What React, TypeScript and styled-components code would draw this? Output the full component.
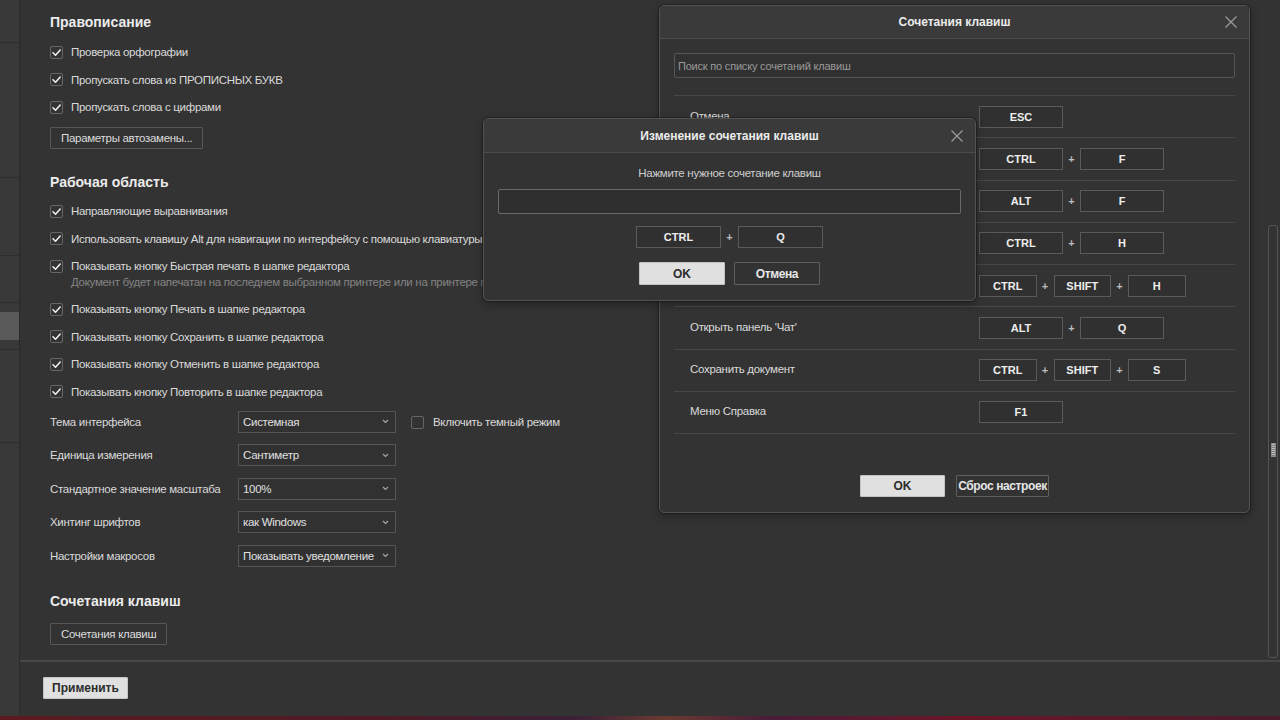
import React from "react";
import styled, { createGlobalStyle, css } from "styled-components";

const GlobalStyle = createGlobalStyle`
  html, body { margin: 0; padding: 0; background: #333; }
  body { font-family: "Liberation Sans", Arial, sans-serif; }
  * { box-sizing: border-box; }
`;

const bodyText = css`
  font-size: 11.5px;
  letter-spacing: -0.3px;
  white-space: nowrap;
`;

const Screen = styled.div`
  position: relative;
  width: 1280px;
  height: 720px;
  overflow: hidden;
  background: #333;
  display: flex;
  flex-direction: column;
  color: #dcdcdc;
`;

const Workspace = styled.div`
  flex: 1;
  display: flex;
  min-height: 0;
`;

const Sidebar = styled.div`
  width: 20px;
  background: #393939;
  border-right: 1px solid #2a2a2a;
  display: flex;
  flex-direction: column;
`;

const SideItem = styled.div<{ $h: number }>`
  height: ${(p) => p.$h}px;
  border-bottom: 1px solid #2e2e2e;
  flex: none;
`;

const SideActive = styled.div`
  margin-top: 9px;
  height: 28px;
  background: #5a5a5a;
`;

const Main = styled.div`
  flex: 1;
  display: flex;
  flex-direction: column;
  min-width: 0;
`;

const MainBody = styled.div`
  height: 660px;
  display: flex;
`;

const Content = styled.div`
  flex: 1;
  padding: 13px 0 0 30px;
  display: flex;
  flex-direction: column;
  align-items: flex-start;
`;

const ScrollColumn = styled.div`
  width: 14px;
  padding: 225px 2px 2px 2px;
  display: flex;
`;

const ScrollTrack = styled.div`
  flex: 1;
  border: 1px solid #555;
  border-radius: 3px;
  display: flex;
  align-items: center;
  justify-content: center;
`;

const ScrollGrip = styled.div`
  width: 5px;
  height: 14px;
  margin-top: 16px;
  background: repeating-linear-gradient(
    180deg,
    #bdbdbd 0px,
    #bdbdbd 1px,
    #7a7a7a 1px,
    #7a7a7a 2px
  );
  border: 1px solid #8a8a8a;
`;

const Footer = styled.div`
  height: 56px;
  border-top: 2px solid #474747;
  padding: 15px 0 0 23px;
`;

const BottomStrip = styled.div`
  height: 4px;
  background: linear-gradient(
    90deg,
    #5b1a1f 0%,
    #4f1a25 30%,
    #3b2038 45%,
    #6a3a30 52%,
    #4a1c38 60%,
    #6b1628 75%,
    #4a1a2a 100%
  );
`;

const SectionTitle = styled.div<{ $mt?: number }>`
  margin-top: ${(p) => p.$mt ?? 0}px;
  font-size: 14px;
  line-height: 18px;
  font-weight: bold;
  color: #ececec;
`;

const CheckList = styled.div<{ $mt: number }>`
  margin-top: ${(p) => p.$mt}px;
  display: flex;
  flex-direction: column;
`;

const CheckRow = styled.div`
  display: flex;
  align-items: flex-start;
  gap: 8px;
  padding: 7px 0 6.5px;
`;

const Box = styled.span`
  flex: none;
  width: 13px;
  height: 13px;
  margin-top: 0.5px;
  border: 1px solid #666;
  border-radius: 2px;
  background: #333;
  display: flex;
  align-items: center;
  justify-content: center;
`;

const CheckText = styled.div`
  display: flex;
  flex-direction: column;
`;

const Label = styled.span`
  ${bodyText};
  line-height: 14px;
  color: #dadada;
`;

const SubLabel = styled.span`
  ${bodyText};
  margin-top: 1.5px;
  line-height: 14px;
  color: #848484;
`;

const Button = styled.button<{ $mt?: number }>`
  ${bodyText};
  margin-top: ${(p) => p.$mt ?? 0}px;
  height: 22px;
  padding: 0 10px;
  border: 1px solid #575757;
  border-radius: 1px;
  background: #333;
  color: #dcdcdc;
  font-family: inherit;
`;

const PrimaryButton = styled.button<{ $w: number; $h?: number }>`
  width: ${(p) => p.$w}px;
  height: ${(p) => p.$h ?? 22}px;
  padding: 0;
  border: 1px solid #c4c4c4;
  border-radius: 1px;
  background: #e0e0e0;
  color: #2c2c2c;
  font-family: inherit;
  font-size: 12px;
  font-weight: bold;
  white-space: nowrap;
`;

const DarkButton = styled.button<{ $w: number; $h?: number }>`
  width: ${(p) => p.$w}px;
  height: ${(p) => p.$h ?? 22}px;
  padding: 0;
  border: 1px solid #5e5e5e;
  border-radius: 1px;
  background: #323232;
  color: #e6e6e6;
  font-family: inherit;
  font-size: 12px;
  font-weight: bold;
  letter-spacing: -0.4px;
  white-space: nowrap;
`;

const FormList = styled.div`
  display: flex;
  flex-direction: column;
`;

const FormRow = styled.div`
  height: 33.5px;
  display: flex;
  align-items: center;
`;

const FormLabel = styled.span`
  ${bodyText};
  width: 188px;
  color: #dadada;
`;

const Select = styled.div`
  ${bodyText};
  width: 158px;
  height: 22px;
  border: 1px solid #555;
  background: #313131;
  display: flex;
  align-items: center;
  justify-content: space-between;
  padding: 0 6px 0 4px;
  color: #e0e0e0;
`;

const InlineCheck = styled.div`
  margin-left: 15px;
  display: flex;
  align-items: center;
  gap: 9px;
`;

/* dialogs */
const Dialog = styled.div<{ $l: number; $t: number; $w: number; $h: number }>`
  position: absolute;
  left: ${(p) => p.$l}px;
  top: ${(p) => p.$t}px;
  width: ${(p) => p.$w}px;
  height: ${(p) => p.$h}px;
  background: #333;
  border: 1px solid #525252;
  border-radius: 5px;
  box-shadow: 0 0 0 1px rgba(0, 0, 0, 0.25), 0 3px 10px rgba(0, 0, 0, 0.35);
  display: flex;
  flex-direction: column;
  overflow: hidden;
`;

const DialogHeader = styled.div<{ $h: number }>`
  position: relative;
  height: ${(p) => p.$h}px;
  flex: none;
  background: #3a3a3a;
  border-bottom: 1px solid #4b4b4b;
  display: flex;
  align-items: center;
  justify-content: center;
  font-size: 12px;
  font-weight: bold;
  color: #ececec;
`;

const CloseBtn = styled.span`
  position: absolute;
  right: 11px;
  top: 50%;
  transform: translateY(-50%);
  width: 14px;
  height: 14px;
  display: flex;
`;

const DialogBody = styled.div`
  flex: 1;
  padding: 14px 14px 0;
  display: flex;
  flex-direction: column;
`;

const SearchInput = styled.div`
  height: 25px;
  border: 1px solid #555;
  border-radius: 2px;
  background: #313131;
  display: flex;
  align-items: center;
  padding-left: 3px;
  font-size: 11px;
  color: #9a9a9a;
  letter-spacing: -0.2px;
`;

const ShortcutList = styled.div`
  margin-top: 17px;
  border-top: 1px solid #474747;
`;

const ShortcutRow = styled.div`
  height: 42.25px;
  border-bottom: 1px solid #474747;
  display: grid;
  grid-template-columns: 305px 1fr;
  align-items: center;
`;

const ShortcutName = styled.span`
  ${bodyText};
  padding-left: 16px;
  padding-bottom: 2px;
  color: #dadada;
`;

const Keys = styled.div<{ $center?: boolean }>`
  display: flex;
  align-items: center;
  justify-content: ${(p) => (p.$center ? "center" : "flex-start")};
`;

const Key = styled.span<{ $w: number }>`
  width: ${(p) => p.$w}px;
  height: 22px;
  border: 1px solid #5a5a5a;
  background: #303030;
  display: flex;
  align-items: center;
  justify-content: center;
  font-size: 11px;
  font-weight: bold;
  color: #ededed;
`;

const Plus = styled.span`
  width: 17px;
  text-align: center;
  font-size: 11px;
  font-weight: bold;
  color: #bdbdbd;
`;

const DialogButtons = styled.div<{ $mt: number; $gap: number }>`
  margin-top: ${(p) => p.$mt}px;
  display: flex;
  justify-content: center;
  gap: ${(p) => p.$gap}px;
`;

const Prompt = styled.div`
  ${bodyText};
  margin-top: -1px;
  text-align: center;
  line-height: 14px;
  color: #cfcfcf;
`;

const KeyInput = styled.div`
  margin-top: 9px;
  height: 25px;
  border: 1px solid #6a6a6a;
  border-radius: 2px;
  background: #2f2f2f;
`;

const KeysBlock = styled.div`
  margin-top: 12px;
`;

const Check = () => (
  <svg width="11" height="11" viewBox="0 0 11 11">
    <polyline
      points="2,5.8 4.5,8.2 9.2,3"
      fill="none"
      stroke="#f2f2f2"
      strokeWidth="1.5"
      strokeLinecap="round"
      strokeLinejoin="round"
    />
  </svg>
);

const Chevron = () => (
  <svg width="7" height="5" viewBox="0 0 7 5">
    <polyline points="1,1 3.5,3.5 6,1" fill="none" stroke="#a8a8a8" strokeWidth="1.1" />
  </svg>
);

const CloseIcon = () => (
  <svg width="14" height="14" viewBox="0 0 14 14">
    <path d="M1.5 1.5 L12.5 12.5 M12.5 1.5 L1.5 12.5" stroke="#9c9c9c" strokeWidth="1.2" fill="none" />
  </svg>
);

type CheckItem = { label: string; sub?: string; checked?: boolean };

const CheckLine = ({ label, sub, checked = true }: CheckItem) => (
  <CheckRow>
    <Box>{checked && <Check />}</Box>
    <CheckText>
      <Label>{label}</Label>
      {sub && <SubLabel>{sub}</SubLabel>}
    </CheckText>
  </CheckRow>
);

const spelling: CheckItem[] = [
  { label: "Проверка орфографии" },
  { label: "Пропускать слова из ПРОПИСНЫХ БУКВ" },
  { label: "Пропускать слова с цифрами" },
];

const workspace: CheckItem[] = [
  { label: "Направляющие выравнивания" },
  { label: "Использовать клавишу Alt для навигации по интерфейсу с помощью клавиатуры" },
  {
    label: "Показывать кнопку Быстрая печать в шапке редактора",
    sub: "Документ будет напечатан на последнем выбранном принтере или на принтере по умолчанию",
  },
  { label: "Показывать кнопку Печать в шапке редактора" },
  { label: "Показывать кнопку Сохранить в шапке редактора" },
  { label: "Показывать кнопку Отменить в шапке редактора" },
  { label: "Показывать кнопку Повторить в шапке редактора" },
];

const formRows = [
  { label: "Тема интерфейса", value: "Системная", extra: true },
  { label: "Единица измерения", value: "Сантиметр" },
  { label: "Стандартное значение масштаба", value: "100%" },
  { label: "Хинтинг шрифтов", value: "как Windows" },
  { label: "Настройки макросов", value: "Показывать уведомление" },
];

/* rows 2-5 have their names hidden under the inner dialog in the reference */
const shortcuts: { id: string; name: string; keys: string[] }[] = [
  { id: "undo", name: "Отмена", keys: ["ESC"] },
  { id: "find", name: "", keys: ["CTRL", "F"] },
  { id: "file", name: "", keys: ["ALT", "F"] },
  { id: "replace", name: "", keys: ["CTRL", "H"] },
  { id: "comments", name: "", keys: ["CTRL", "SHIFT", "H"] },
  { id: "chat", name: "Открыть панель 'Чат'", keys: ["ALT", "Q"] },
  { id: "save", name: "Сохранить документ", keys: ["CTRL", "SHIFT", "S"] },
  { id: "help", name: "Меню Справка", keys: ["F1"] },
];

const KeyCombo = ({ keys, w, center }: { keys: string[]; w?: number; center?: boolean }) => {
  const width = w ?? (keys.length > 2 ? 57.5 : 84);
  return (
    <Keys $center={center}>
      {keys.map((k, i) => (
        <React.Fragment key={k + i}>
          {i > 0 && <Plus>+</Plus>}
          <Key $w={width}>{k}</Key>
        </React.Fragment>
      ))}
    </Keys>
  );
};

export default function App() {
  return (
    <>
      <GlobalStyle />
      <Screen>
        <Workspace>
          <Sidebar>
            <SideItem $h={43} />
            <SideItem $h={135} />
            <SideItem $h={78} />
            <SideItem $h={47} />
            <SideItem $h={47}>
              <SideActive />
            </SideItem>
            <SideItem $h={93} />
          </Sidebar>
          <Main>
            <MainBody>
              <Content>
                <SectionTitle>Правописание</SectionTitle>
                <CheckList $mt={7}>
                  {spelling.map((c) => (
                    <CheckLine key={c.label} {...c} />
                  ))}
                </CheckList>
                <Button $mt={6.5}>Параметры автозамены...</Button>

                <SectionTitle $mt={24}>Рабочая область</SectionTitle>
                <CheckList $mt={6}>
                  {workspace.map((c) => (
                    <CheckLine key={c.label} {...c} />
                  ))}
                </CheckList>

                <FormList>
                  {formRows.map((r) => (
                    <FormRow key={r.label}>
                      <FormLabel>{r.label}</FormLabel>
                      <Select>
                        <span>{r.value}</span>
                        <Chevron />
                      </Select>
                      {r.extra && (
                        <InlineCheck>
                          <Box />
                          <Label>Включить темный режим</Label>
                        </InlineCheck>
                      )}
                    </FormRow>
                  ))}
                </FormList>

                <SectionTitle $mt={19}>Сочетания клавиш</SectionTitle>
                <Button $mt={13}>Сочетания клавиш</Button>
              </Content>
              <ScrollColumn>
                <ScrollTrack>
                  <ScrollGrip />
                </ScrollTrack>
              </ScrollColumn>
            </MainBody>
            <Footer>
              <PrimaryButton $w={85}>Применить</PrimaryButton>
            </Footer>
          </Main>
        </Workspace>
        <BottomStrip />

        <Dialog $l={659} $t={5} $w={591} $h={508}>
          <DialogHeader $h={33}>
            Сочетания клавиш
            <CloseBtn>
              <CloseIcon />
            </CloseBtn>
          </DialogHeader>
          <DialogBody>
            <SearchInput>Поиск по списку сочетаний клавиш</SearchInput>
            <ShortcutList>
              {shortcuts.map((s) => (
                <ShortcutRow key={s.id}>
                  <ShortcutName>{s.name}</ShortcutName>
                  <KeyCombo keys={s.keys} />
                </ShortcutRow>
              ))}
            </ShortcutList>
            <DialogButtons $mt={41} $gap={11}>
              <PrimaryButton $w={85}>OK</PrimaryButton>
              <DarkButton $w={93}>Сброс настроек</DarkButton>
            </DialogButtons>
          </DialogBody>
        </Dialog>

        <Dialog $l={483} $t={118} $w={493} $h={183}>
          <DialogHeader $h={34}>
            Изменение сочетания клавиш
            <CloseBtn>
              <CloseIcon />
            </CloseBtn>
          </DialogHeader>
          <DialogBody>
            <Prompt>Нажмите нужное сочетание клавиш</Prompt>
            <KeyInput />
            <KeysBlock>
              <KeyCombo keys={["CTRL", "Q"]} w={85} center />
            </KeysBlock>
            <DialogButtons $mt={14} $gap={9}>
              <PrimaryButton $w={86} $h={23}>OK</PrimaryButton>
              <DarkButton $w={86} $h={23}>Отмена</DarkButton>
            </DialogButtons>
          </DialogBody>
        </Dialog>
      </Screen>
    </>
  );
}
